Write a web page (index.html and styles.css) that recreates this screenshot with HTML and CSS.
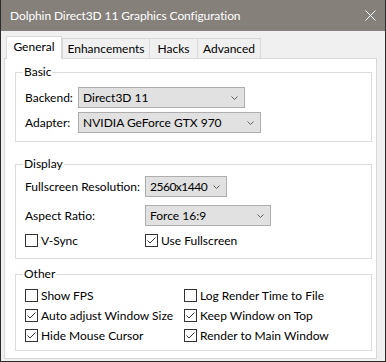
FILE: index.html
```html
<!DOCTYPE html>
<html>
<head>
<meta charset="utf-8">
<link rel="stylesheet" href="styles.css">
</head>
<body>
<div class="window">
  <div class="titlebar">
    <span class="title">Dolphin Direct3D 11 Graphics Configuration</span>
    <svg class="close" width="11" height="11" viewBox="0 0 11 11"><path d="M0.5 0.5 L10.5 10.5 M10.5 0.5 L0.5 10.5" stroke="#fff" stroke-width="1" fill="none"/></svg>
  </div>
  <div class="content">
    <div class="tabs">
      <div class="tab sel t-general">General</div>
      <div class="tab t-enh">Enhancements</div>
      <div class="tab t-hacks">Hacks</div>
      <div class="tab t-adv">Advanced</div>
    </div>
    <div class="panel">
      <fieldset class="group basic">
        <legend>Basic</legend>
        <div class="form">
          <span class="lbl">Backend:</span>
          <div class="combo w-backend"><span>Direct3D 11</span><svg width="7" height="4" viewBox="0 0 7 4"><path d="M0.5 0.5 L3.5 3.5 L6.5 0.5" stroke="#606060" fill="none"/></svg></div>
          <span class="lbl">Adapter:</span>
          <div class="combo w-adapter"><span>NVIDIA GeForce GTX 970</span><svg width="7" height="4" viewBox="0 0 7 4"><path d="M0.5 0.5 L3.5 3.5 L6.5 0.5" stroke="#606060" fill="none"/></svg></div>
        </div>
      </fieldset>
      <fieldset class="group display">
        <legend>Display</legend>
        <div class="form">
          <span class="lbl">Fullscreen Resolution:</span>
          <div class="combo w-res"><span class="tight">2560x1440</span><svg width="7" height="4" viewBox="0 0 7 4"><path d="M0.5 0.5 L3.5 3.5 L6.5 0.5" stroke="#606060" fill="none"/></svg></div>
          <span class="lbl">Aspect Ratio:</span>
          <div class="combo w-aspect"><span>Force 16:9</span><svg width="7" height="4" viewBox="0 0 7 4"><path d="M0.5 0.5 L3.5 3.5 L6.5 0.5" stroke="#606060" fill="none"/></svg></div>
          <label class="check"><span class="box"></span><span>V-Sync</span></label>
          <label class="check"><span class="box on"><svg width="11" height="11" viewBox="0 0 11 11"><path d="M1.5 5.5 L4 8 L9.5 2.5" stroke="#333" fill="none"/></svg></span><span>Use Fullscreen</span></label>
        </div>
      </fieldset>
      <fieldset class="group other">
        <legend>Other</legend>
        <div class="checks">
          <label class="check"><span class="box"></span><span>Show FPS</span></label>
          <label class="check"><span class="box"></span><span>Log Render Time to File</span></label>
          <label class="check"><span class="box on"><svg width="11" height="11" viewBox="0 0 11 11"><path d="M1.5 5.5 L4 8 L9.5 2.5" stroke="#333" fill="none"/></svg></span><span>Auto adjust Window Size</span></label>
          <label class="check"><span class="box on"><svg width="11" height="11" viewBox="0 0 11 11"><path d="M1.5 5.5 L4 8 L9.5 2.5" stroke="#333" fill="none"/></svg></span><span>Keep Window on Top</span></label>
          <label class="check"><span class="box on"><svg width="11" height="11" viewBox="0 0 11 11"><path d="M1.5 5.5 L4 8 L9.5 2.5" stroke="#333" fill="none"/></svg></span><span>Hide Mouse Cursor</span></label>
          <label class="check"><span class="box on"><svg width="11" height="11" viewBox="0 0 11 11"><path d="M1.5 5.5 L4 8 L9.5 2.5" stroke="#333" fill="none"/></svg></span><span>Render to Main Window</span></label>
        </div>
      </fieldset>
    </div>
  </div>
</div>
</body>
</html>
```

FILE: styles.css
```css
* { box-sizing: border-box; }
html, body { margin: 0; padding: 0; }
body {
  font-family: "Segoe UI", Lato, sans-serif;
  font-size: 12px;
  color: #000;
  background: #fff;
  white-space: nowrap;
}
.window {
  width: 386px;
  height: 362px;
  border: 1px solid #2b2b2b;
  border-top: none;
  background: #f0f0f0;
  display: flex;
  flex-direction: column;
}
.titlebar {
  height: 31px;
  flex: none;
  background: #85807a;
  color: #fff;
  display: flex;
  align-items: center;
  padding: 0 9px 0 9px;
}
.title { line-height: 16px; letter-spacing: -0.1px; }
.close { margin-left: auto; display: block; }
.content {
  flex: 1;
  display: flex;
  flex-direction: column;
  padding: 5px 8px 2px 3px;
}
.tabs {
  display: flex;
  align-items: flex-end;
  height: 22px;
  padding-left: 2px;
  flex: none;
}
.tab {
  height: 20px;
  border: 1px solid #d9d9d9;
  border-bottom: none;
  background: #f0f0f0;
  display: flex;
  align-items: center;
  justify-content: center;
  line-height: 16px;
}
.tab.sel {
  height: 23px;
  margin-bottom: -1px;
  background: #fff;
  position: relative;
  z-index: 1;
  padding-bottom: 3px;
}
.t-general { width: 56px; }
.t-enh { width: 88px; }
.t-hacks { width: 49px; margin-left: -1px; }
.t-adv { width: 64px; margin-left: -1px; }
.panel {
  flex: 1;
  background: #fff;
  border: 1px solid #d9d9d9;
  padding: 5px 4px 0 10px;
}
.group {
  border: 1px solid #dcdcdc;
  margin: 0;
  padding: 0 8px 0 9px;
  min-width: 0;
}
.group legend {
  padding: 0 1px;
  margin-left: -2px;
  line-height: 16px;
}
.form {
  display: grid;
  align-items: center;
  justify-items: start;
}
.basic { padding-top: 7px; padding-bottom: 8px; }
.basic .form { grid-template-columns: 53px auto; row-gap: 4px; }
.display { margin-top: 14px; padding-top: 4px; padding-bottom: 11px; }
.display .form { grid-template-columns: 120px auto; row-gap: 8px; }
.other { margin-top: 7px; padding-top: 3px; padding-bottom: 5px; }
.checks { display: grid; grid-template-columns: 159px auto; }
.combo {
  height: 21px;
  border: 1px solid #adadad;
  background: #e1e1e1;
  display: flex;
  align-items: center;
  justify-content: space-between;
  padding: 0 6px 0 4px;
}
.combo svg { display: block; }
.tight { letter-spacing: -0.5px; }
.w-backend { width: 167px; }
.w-adapter { width: 183px; }
.w-res { width: 82px; }
.w-aspect { width: 126px; }
.check {
  display: flex;
  align-items: center;
  height: 20px;
  gap: 3px;
}
.display .check { height: 13px; }
.box {
  width: 13px;
  height: 13px;
  border: 1px solid #333;
  background: #fff;
  flex: none;
}
.box svg { display: block; }
```
